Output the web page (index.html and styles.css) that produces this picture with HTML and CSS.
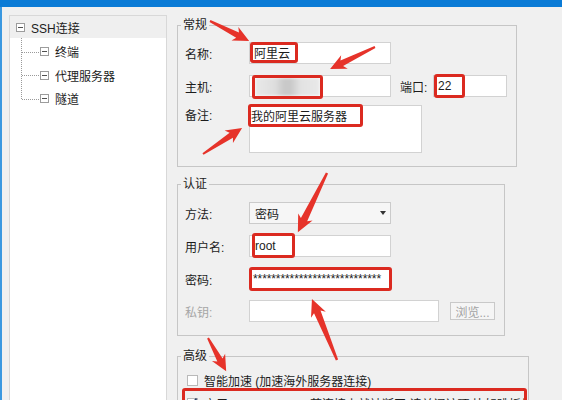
FILE: index.html
```html
<!DOCTYPE html>
<html lang="zh-CN">
<head>
<meta charset="utf-8">
<title>SSH连接</title>
<link rel="stylesheet" href="styles.css">
</head>
<body>
<div class="window">
  <div class="titlebar"></div>
  <div class="main">
    <div class="tree">
      <div class="node-root"><span class="toggle"></span>SSH连接</div>
      <div class="children">
        <div class="child"><span class="toggle"></span>终端</div>
        <div class="child"><span class="toggle"></span>代理服务器</div>
        <div class="child"><span class="toggle"></span>隧道</div>
      </div>
    </div>
    <div class="form">
      <fieldset class="group g-general">
        <legend>常规</legend>
        <div class="row r1">
          <span class="label">名称:</span>
          <div class="field w142"><span class="mark m-name">阿里云</span></div>
        </div>
        <div class="row r2">
          <span class="label">主机:</span>
          <div class="field w142"><span class="mark m-host"><span class="blur"></span></span></div>
          <span class="label port-label">端口:</span>
          <div class="field w74"><span class="mark m-port">22</span></div>
        </div>
        <div class="row r3">
          <span class="label">备注:</span>
          <div class="field area"><span class="mark m-note">我的阿里云服务器</span></div>
        </div>
      </fieldset>

      <fieldset class="group g-auth">
        <legend>认证</legend>
        <div class="row a1">
          <span class="label">方法:</span>
          <div class="field select w142"><span>密码</span><span class="caret"></span></div>
        </div>
        <div class="row a2">
          <span class="label">用户名:</span>
          <div class="field w142"><span class="mark m-user">root</span></div>
        </div>
        <div class="row a3">
          <span class="label">密码:</span>
          <div class="field w142 marked pw">****************************</div>
        </div>
        <div class="row a4">
          <span class="label disabled">私钥:</span>
          <div class="field w190"></div>
          <span class="button">浏览...</span>
        </div>
      </fieldset>

      <fieldset class="group g-adv">
        <legend>高级</legend>
        <div class="check c1"><span class="box"></span>智能加速 (加速海外服务器连接)</div>
        <div class="check c2"><span class="box checked"><svg width="11" height="11" viewBox="0 0 11 11"><polyline points="1.5,5.5 4,8.5 9.5,1.5" fill="none" stroke="#2b3f66" stroke-width="1.8"/></svg></span>启用Exec Channel (若连接上就被断开,请关闭该项,比如跳板机)</div>
      </fieldset>
    </div>
  </div>
  <svg class="arrows" width="562" height="400" viewBox="0 0 562 400">
    <g fill="#e6332a">
      <g transform="translate(210 21) rotate(27.1)"><polygon points="0,-1 31,-3 28,-7.5 44,0 28,7.5 31,3 0,1"/></g>
      <g transform="translate(375 47) rotate(153.9)"><polygon points="0,-1 37,-3 34,-7.5 50,0 34,7.5 37,3 0,1"/></g>
      <g transform="translate(203 154) rotate(-33.7)"><polygon points="0,-1 34,-3 31,-7.5 47,0 31,7.5 34,3 0,1"/></g>
      <g transform="translate(327 173) rotate(116.2)"><polygon points="0,-1.2 52,-3.5 49,-8 66,0 49,8 52,3.5 0,1.2"/></g>
      <g transform="translate(337 360) rotate(-112.3)"><polygon points="0,-1.2 52,-3.5 49,-8 66,0 49,8 52,3.5 0,1.2"/></g>
      <g transform="translate(208 338) rotate(61.4)"><polygon points="0,-1 25,-3 22,-7.5 38,0 22,7.5 25,3 0,1"/></g>
    </g>
  </svg>
</div>
</body>
</html>
```

FILE: styles.css
```css
html, body {
  margin: 0;
  padding: 0;
}
body {
  font-family: "Liberation Sans", "Noto Sans CJK SC", sans-serif;
  font-size: 12px;
  color: #1c1c1c;
  background: #f0f0f0;
}
.window {
  position: relative;
  width: 562px;
  height: 400px;
  overflow: hidden;
  background: #f0f0f0;
}
.titlebar {
  height: 7px;
  background: #0a7bd6;
}
.main {
  display: flex;
  align-items: flex-start;
  height: 393px;
  border-left: 2px solid #3a98e0;
  box-sizing: border-box;
}

/* tree */
.tree {
  width: 158px;
  height: 386px;
  margin: 8px 0 0 7px;
  background: #fff;
  border: 1px solid #d8d8d8;
  border-bottom: 0;
  box-sizing: border-box;
  flex: none;
}
.node-root {
  height: 22px;
  background: #efefef;
  display: flex;
  align-items: center;
  padding-left: 6px;
}
.toggle {
  width: 9px;
  height: 9px;
  border: 1px solid #9c9c9c;
  box-sizing: border-box;
  position: relative;
  margin-right: 6px;
  background: #fff;
  flex: none;
}
.toggle::after {
  content: "";
  position: absolute;
  left: 1px;
  right: 1px;
  top: 3px;
  height: 1px;
  background: #505050;
}
.children {
  position: relative;
  padding-top: 2px;
}
.children::before {
  content: "";
  position: absolute;
  left: 11px;
  top: 0;
  bottom: 11.75px;
  border-left: 1px dotted #9a9a9a;
}
.child {
  position: relative;
  height: 23.5px;
  display: flex;
  align-items: center;
  padding-left: 30px;
}
.child::before {
  content: "";
  position: absolute;
  left: 12px;
  width: 17px;
  top: 50%;
  border-top: 1px dotted #9a9a9a;
}

/* form */
.form {
  margin-left: 10px;
  padding-top: 10px;
  display: flex;
  flex-direction: column;
  flex: none;
}
.group {
  margin: 0;
  padding: 0;
  border: 1px solid #c6c6c6;
  box-sizing: border-box;
  min-width: 0;
}
.group legend {
  margin-left: 3px;
  padding: 0 2px;
  line-height: 16px;
  height: 16px;
}
.g-general {
  width: 340px;
  padding-bottom: 13px;
}
.g-auth {
  width: 328px;
  margin-top: 9px;
  padding-bottom: 13px;
}
.g-adv {
  width: 352px;
  margin-top: 12px;
  height: 80px;
}
.row {
  display: flex;
  align-items: center;
  height: 22px;
  padding-left: 7px;
}
.r1 { margin-top: 9px; }
.r2 { margin-top: 11px; }
.r3 { margin-top: 8px; height: 48px; align-items: flex-start; }
.r3 .label { line-height: 22px; }
.a1 { margin-top: 10px; }
.a2 { margin-top: 11px; }
.a3 { margin-top: 11px; }
.a4 { margin-top: 10px; }
.label {
  width: 64px;
  flex: none;
}
.label.disabled { color: #a6a6a6; }
.port-label {
  width: 33px;
  margin-left: 9px;
}
.field {
  height: 22px;
  border: 1px solid #d2d2d2;
  background: #fff;
  box-sizing: border-box;
  display: flex;
  align-items: center;
  flex: none;
}
.w142 { width: 142px; }
.w74 { width: 74px; }
.w190 { width: 190px; }
.area {
  width: 173px;
  height: 48px;
  align-items: flex-start;
}
.select {
  background: #f6f6f6;
  border-color: #cbcbcb;
  justify-content: space-between;
  padding-left: 5px;
}
.caret {
  width: 0;
  height: 0;
  border-left: 3.5px solid transparent;
  border-right: 3.5px solid transparent;
  border-top: 4px solid #333;
  margin-right: 4px;
}
.mark {
  border: 3px solid #db2a20;
  border-radius: 3px;
  box-sizing: border-box;
  display: flex;
  align-items: center;
  flex: none;
}
.m-name {
  height: 21px;
  margin-top: -1px;
  padding: 0 5px 0 1px;
  width: 48px;
}
.m-host {
  width: 71px;
  height: 24px;
  margin: 0 0 -1px 2px;
  padding: 0;
  overflow: hidden;
}
.blur {
  display: block;
  width: 100%;
  height: 100%;
  background: linear-gradient(90deg, #e9e9e9 0%, #dedede 30%, #c9c9c9 45%, #c9c9c9 55%, #e2e2e2 70%, #e9e9e9 100%);
  filter: blur(1.5px);
}
.m-port {
  width: 31px;
  height: 24px;
  margin: -1px 0 -1px 0;
  padding-left: 1px;
}
.m-note {
  width: 115px;
  height: 23px;
  margin: -2px 0 0 -2px;
  padding-left: 0;
  white-space: nowrap;
}
.m-user {
  width: 43px;
  height: 25px;
  margin: -2px 0 -1px 2px;
  padding-left: 0;
}
.marked.pw {
  border: 3px solid #db2a20;
  border-radius: 3px;
  height: 24px;
  width: 143px;
  margin: -1px 0 -1px 0;
  padding-left: 1px;
  font-size: 12px;
  letter-spacing: -0.1px;
  overflow: hidden;
  white-space: nowrap;
}
.button {
  width: 45px;
  height: 18px;
  margin-left: 11px;
  border: 1px solid #c9c9c9;
  background: #f5f5f5;
  color: #a3a3a3;
  box-sizing: border-box;
  display: flex;
  align-items: center;
  justify-content: center;
  flex: none;
}

/* checkboxes */
.check {
  display: flex;
  align-items: center;
  white-space: nowrap;
}
.box {
  width: 11px;
  height: 11px;
  border: 1px solid #b9b9b9;
  background: #fff;
  box-sizing: border-box;
  margin-right: 6px;
  flex: none;
  position: relative;
}
.box svg {
  position: absolute;
  left: -1px;
  top: -2px;
}
.c1 {
  height: 16px;
  margin-top: 8px;
  padding-left: 9px;
}
.c2 {
  margin: 0 0 0 4px;
  width: 345px;
  height: 26px;
  border: 3px solid #db2a20;
  border-radius: 3px;
  box-sizing: border-box;
  padding-left: 2px;
  padding-top: 4px;
  overflow: hidden;
}

/* annotation arrows */
.arrows {
  position: absolute;
  left: 0;
  top: 0;
  pointer-events: none;
}
```
